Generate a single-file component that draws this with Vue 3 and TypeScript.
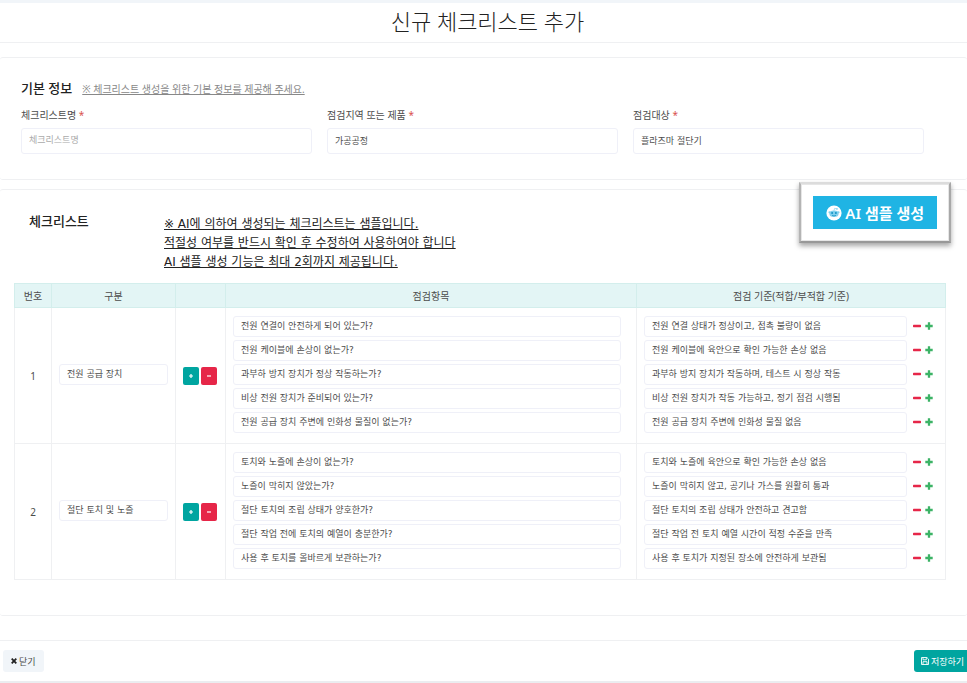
<script setup lang="ts">
import { ref } from 'vue'

interface Field {
  id: string
  label: string
  value: string
  placeholder: string
}

interface CheckItem {
  question: string
  criterion: string
}

interface Group {
  name: string
  items: CheckItem[]
}

const fields = ref<Field[]>([
  { id: 'name', label: '체크리스트명', value: '', placeholder: '체크리스트명' },
  { id: 'area', label: '점검지역 또는 제품', value: '가공공정', placeholder: '' },
  { id: 'target', label: '점검대상', value: '플라즈마 절단기', placeholder: '' },
])

const notices: string[] = [
  '※ AI에 의하여 생성되는 체크리스트는 샘플입니다.',
  '적절성 여부를 반드시 확인 후 수정하여 사용하여야 합니다',
  'AI 샘플 생성 기능은 최대 2회까지 제공됩니다.',
]

const groups = ref<Group[]>([
  {
    name: '전원 공급 장치',
    items: [
      { question: '전원 연결이 안전하게 되어 있는가?', criterion: '전원 연결 상태가 정상이고, 접촉 불량이 없음' },
      { question: '전원 케이블에 손상이 없는가?', criterion: '전원 케이블에 육안으로 확인 가능한 손상 없음' },
      { question: '과부하 방지 장치가 정상 작동하는가?', criterion: '과부하 방지 장치가 작동하며, 테스트 시 정상 작동' },
      { question: '비상 전원 장치가 준비되어 있는가?', criterion: '비상 전원 장치가 작동 가능하고, 정기 점검 시행됨' },
      { question: '전원 공급 장치 주변에 인화성 물질이 없는가?', criterion: '전원 공급 장치 주변에 인화성 물질 없음' },
    ],
  },
  {
    name: '절단 토치 및 노즐',
    items: [
      { question: '토치와 노즐에 손상이 없는가?', criterion: '토치와 노즐에 육안으로 확인 가능한 손상 없음' },
      { question: '노즐이 막히지 않았는가?', criterion: '노즐이 막히지 않고, 공기나 가스를 원활히 통과' },
      { question: '절단 토치의 조립 상태가 양호한가?', criterion: '절단 토치의 조립 상태가 안전하고 견고함' },
      { question: '절단 작업 전에 토치의 예열이 충분한가?', criterion: '절단 작업 전 토치 예열 시간이 적정 수준을 만족' },
      { question: '사용 후 토치를 올바르게 보관하는가?', criterion: '사용 후 토치가 지정된 장소에 안전하게 보관됨' },
    ],
  },
])

function addGroup(index: number) {
  groups.value.splice(index + 1, 0, { name: '', items: [{ question: '', criterion: '' }] })
}

function removeGroup(index: number) {
  if (groups.value.length > 1) groups.value.splice(index, 1)
}

function addItem(group: Group, index: number) {
  group.items.splice(index + 1, 0, { question: '', criterion: '' })
}

function removeItem(group: Group, index: number) {
  if (group.items.length > 1) group.items.splice(index, 1)
}
</script>

<template>
  <div class="page">
    <header class="page-head">
      <h1>신규 체크리스트 추가</h1>
    </header>

    <main>
      <section class="panel basic">
        <div class="basic-head">
          <h2>기본 정보</h2>
          <span class="hint">※ 체크리스트 생성을 위한 기본 정보를 제공해 주세요.</span>
        </div>
        <div class="fields">
          <div v-for="f in fields" :key="f.id" class="field">
            <label :for="f.id">{{ f.label }} <span class="req">*</span></label>
            <input :id="f.id" v-model="f.value" type="text" :placeholder="f.placeholder" />
          </div>
        </div>
      </section>

      <section class="panel checklist">
        <div class="ai-frame">
          <button type="button" class="ai-button">
            <svg viewBox="0 0 16 16" width="16" height="16" aria-hidden="true">
              <circle cx="8" cy="8" r="7.6" fill="#fff" />
              <ellipse cx="8" cy="8.8" rx="4.6" ry="3.3" fill="#7fd0ee" />
              <circle cx="3.5" cy="7.3" r="1.1" fill="#7fd0ee" />
              <circle cx="12.5" cy="7.3" r="1.1" fill="#7fd0ee" />
              <path d="M8 5.6 8.6 3.4 10.8 3.9" fill="none" stroke="#7fd0ee" stroke-width=".7" />
              <circle cx="11" cy="3.9" r=".8" fill="#7fd0ee" />
              <circle cx="6.1" cy="8.1" r="1" fill="#1594c4" />
              <circle cx="9.9" cy="8.1" r="1" fill="#1594c4" />
              <path d="M6 10.3q2 1.3 4 0" fill="none" stroke="#1594c4" stroke-width=".8" />
            </svg>
            <span>AI 샘플 생성</span>
          </button>
        </div>

        <div class="list-head">
          <h2>체크리스트</h2>
          <p class="notice">
            <span v-for="n in notices" :key="n">{{ n }}</span>
          </p>
        </div>

        <table>
          <colgroup>
            <col class="c-no" />
            <col class="c-cat" />
            <col class="c-act" />
            <col />
            <col class="c-crit" />
          </colgroup>
          <thead>
            <tr>
              <th>번호</th>
              <th>구분</th>
              <th></th>
              <th>점검항목</th>
              <th>점검 기준(적합/부적합 기준)</th>
            </tr>
          </thead>
          <tbody>
            <tr v-for="(g, gi) in groups" :key="gi">
              <td class="no">{{ gi + 1 }}</td>
              <td class="cat">
                <input v-model="g.name" type="text" aria-label="구분" />
              </td>
              <td>
                <div class="group-actions">
                  <button type="button" class="add" aria-label="구분 추가" @click="addGroup(gi)">
                    <svg viewBox="0 0 6 6" width="6" height="6"><path d="M3 1v4M1 3h4" stroke="#fff" stroke-width="1.2" /></svg>
                  </button>
                  <button type="button" class="remove" aria-label="구분 삭제" @click="removeGroup(gi)">
                    <svg viewBox="0 0 6 6" width="6" height="6"><path d="M1 3h4" stroke="#fff" stroke-width="1.2" /></svg>
                  </button>
                </div>
              </td>
              <td>
                <div class="stack questions">
                  <input v-for="(it, i) in g.items" :key="i" v-model="it.question" type="text" aria-label="점검항목" />
                </div>
              </td>
              <td>
                <div class="stack">
                  <div v-for="(it, i) in g.items" :key="i" class="criterion">
                    <input v-model="it.criterion" type="text" aria-label="점검 기준" />
                    <button type="button" aria-label="항목 삭제" @click="removeItem(g, i)">
                      <svg viewBox="0 0 8 8" width="8" height="8"><rect x="0" y="2.8" width="8" height="2.4" rx=".6" fill="#e62648" /></svg>
                    </button>
                    <button type="button" aria-label="항목 추가" @click="addItem(g, i)">
                      <svg viewBox="0 0 8 8" width="8" height="8"><path d="M4 .3v7.4M.3 4h7.4" stroke="#3cb366" stroke-width="2.3" /></svg>
                    </button>
                  </div>
                </div>
              </td>
            </tr>
          </tbody>
        </table>
      </section>
    </main>

    <footer>
      <button type="button" class="close">
        <svg viewBox="0 0 6 6" width="6" height="6" aria-hidden="true"><path d="M.7.7l4.6 4.6M5.3.7.7 5.3" stroke="#222" stroke-width="1.8" /></svg>
        닫기
      </button>
      <button type="button" class="save">
        <svg viewBox="0 0 8 8" width="8" height="8" aria-hidden="true">
          <path d="M.5.5h5.4l1.6 1.6v5.4h-7zM2 .5v2.3h3.3V.5M2 7.5V4.7h4v2.8" fill="none" stroke="#fff" stroke-width=".9" />
        </svg>
        저장하기
      </button>
    </footer>
  </div>
</template>

<style>
body {
  margin: 0;
  background: #fff;
}
</style>

<style scoped>
.page {
  box-sizing: border-box;
  min-height: 100vh;
  display: flex;
  flex-direction: column;
  border-top: 3px solid #f1f5f9;
  border-bottom: 2px solid #ebedf0;
  font-family: 'Noto Sans', 'Noto Sans CJK KR', sans-serif;
  font-size: 10px;
  color: #4c4c4c;
}

h1,
h2,
p {
  margin: 0;
}

button,
input {
  box-sizing: border-box;
  font-family: inherit;
}

button {
  border: 0;
  padding: 0;
  cursor: pointer;
}

svg {
  display: block;
  flex: none;
}

.page-head {
  border-bottom: 1px solid #eff0f2;
}

h1 {
  padding: 2px 0 5px 8px;
  font-size: 22px;
  line-height: 32px;
  font-weight: 300;
  color: #222;
  text-align: center;
}

main {
  display: flex;
  flex-direction: column;
  gap: 9px;
  padding: 14px 0 24px;
}

.panel {
  border-top: 1px solid #eff0f2;
  border-bottom: 1px solid #eff0f2;
  border-radius: 3px;
}

h2 {
  font-size: 13px;
  line-height: 20px;
  font-weight: 500;
  color: #222;
}

.basic {
  padding: 20px 43px 25px 21px;
}

.basic-head {
  display: flex;
  align-items: baseline;
  gap: 10px;
}

.hint {
  color: #888;
  text-decoration: underline;
}

.fields {
  display: grid;
  grid-template-columns: repeat(3, 1fr);
  gap: 15px;
  padding-top: 9px;
}

.field {
  display: flex;
  flex-direction: column;
  gap: 5px;
}

.field label {
  line-height: 16px;
}

.req {
  color: #d9534f;
}

input {
  width: 100%;
  min-width: 0;
  height: 21px;
  padding: 0 7px 2px;
  border: 1px solid #eff0f8;
  border-radius: 3px;
  background: #fff;
  font-family: 'DejaVu Sans', 'Noto Sans CJK KR', sans-serif;
  font-size: 9px;
  color: #4c4c4c;
  outline: none;
}

input::placeholder {
  color: #aaa;
  opacity: 1;
}

.field input {
  height: 26px;
}

.checklist {
  position: relative;
  padding: 21px 21px 35px 14px;
}

.ai-frame {
  position: absolute;
  top: -8px;
  right: 16px;
  padding: 12px;
  border: 2px solid;
  border-color: #dcdcdc #a8a8a8 #989898 #b4b4b4;
  background: #fff;
  box-shadow: 0 3px 5px rgba(0, 0, 0, 0.35), inset 0 0 0 1px #e6e6e6;
}

.ai-button {
  display: flex;
  align-items: center;
  gap: 3px;
  height: 33px;
  padding: 0 13px;
  background: #1fb4e4;
  color: #fff;
  font-size: 15px;
  font-weight: 600;
}

.list-head {
  display: grid;
  grid-template-columns: 135px 1fr;
  padding-left: 15px;
  padding-bottom: 11px;
}

.notice {
  display: flex;
  flex-direction: column;
  padding-top: 4px;
  font-family: 'DejaVu Sans', 'Noto Sans CJK KR', sans-serif;
  font-size: 12px;
  line-height: 19px;
  color: #222;
  text-decoration: underline;
}

table {
  width: 100%;
  table-layout: fixed;
  border-collapse: collapse;
}

.c-no {
  width: 37px;
}

.c-cat {
  width: 124px;
}

.c-act {
  width: 50px;
}

.c-crit {
  width: 309px;
}

th {
  height: 22px;
  padding: 0 0 1px;
  border: 1px solid #d3eeec;
  background: #e3f5f5;
  font-size: 10px;
  font-weight: 400;
}

td {
  padding: 8px 7px 10px;
  border: 1px solid #eff0f2;
  vertical-align: middle;
}

td.no {
  padding: 0;
  text-align: center;
}

.stack {
  display: flex;
  flex-direction: column;
  gap: 3px;
}

.questions {
  padding-right: 8px;
}

.criterion {
  display: flex;
  align-items: center;
  gap: 4px;
  padding-right: 5px;
}

.criterion input {
  flex: 1;
  margin-right: 2px;
}

.criterion button {
  padding-bottom: 2px;
  background: none;
}

.group-actions {
  display: flex;
  gap: 2px;
  padding-top: 2px;
}

.group-actions button {
  width: 16px;
  height: 18px;
  display: flex;
  align-items: center;
  justify-content: center;
  border-radius: 2px;
}

.add {
  background: #00a5a0;
}

.remove {
  background: #e62648;
}

footer {
  display: flex;
  justify-content: space-between;
  padding: 9px 0 9px 3px;
  border-top: 1px solid #eff0f2;
}

footer button {
  display: flex;
  align-items: center;
  gap: 2px;
  height: 22px;
  font-size: 9px;
}

.close {
  padding: 0 8px;
  border-radius: 3px;
  background: #f1f5f9;
  color: #4c4c4c;
}

.save {
  padding: 0 3px 0 7px;
  border-radius: 3px 0 0 3px;
  background: #00a5a0;
  color: #fff;
}
</style>
